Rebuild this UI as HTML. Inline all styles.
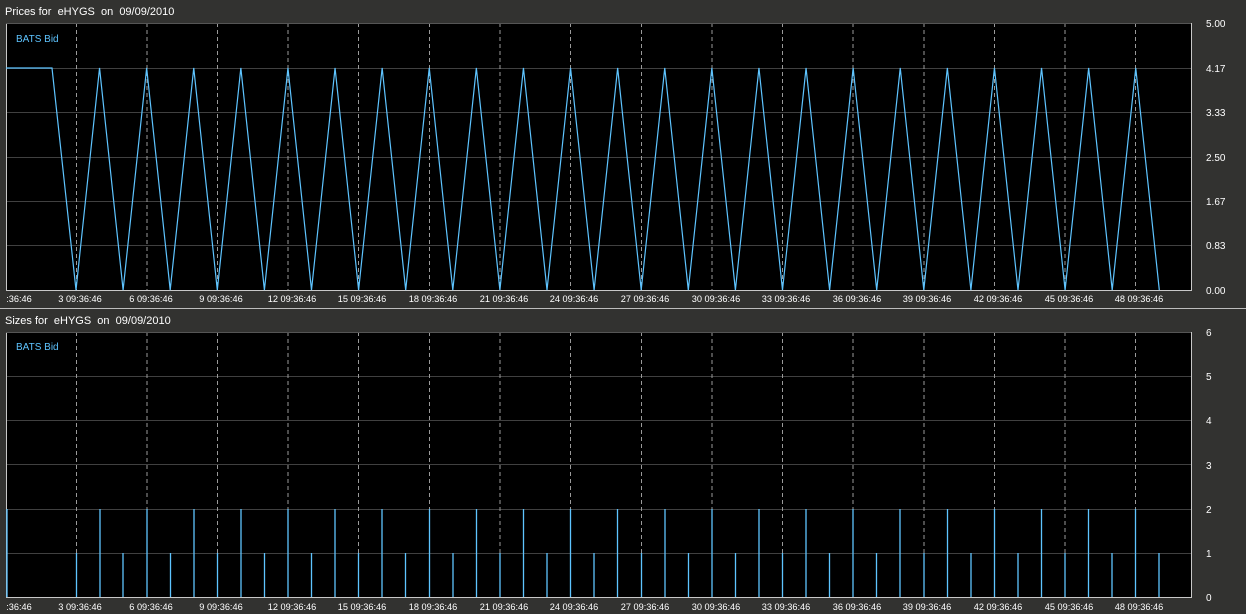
<!DOCTYPE html><html><head><meta charset="utf-8"><style>html,body{margin:0;padding:0;background:#323230;overflow:hidden}svg{display:block}text{font-family:"Liberation Sans",sans-serif;fill:#fff;white-space:pre}</style></head><body>
<svg width="1246" height="614" viewBox="0 0 1246 614" xmlns="http://www.w3.org/2000/svg">
<rect width="1246" height="614" fill="#323230"/>
<line x1="0" y1="308.5" x2="1246" y2="308.5" stroke="#bdbdbd"/>
<text x="5" y="15" font-size="11" xml:space="preserve">Prices for  eHYGS  on  09/09/2010</text>
<text x="5" y="324" font-size="11" xml:space="preserve">Sizes for  eHYGS  on  09/09/2010</text>
<rect x="6" y="23" width="1185" height="267" fill="#000"/>
<rect x="6" y="332" width="1185" height="265" fill="#000"/>
<g stroke="#404040" stroke-width="1">
<line x1="6" y1="68.5" x2="1191" y2="68.5"/><line x1="6" y1="112.5" x2="1191" y2="112.5"/><line x1="6" y1="157.5" x2="1191" y2="157.5"/><line x1="6" y1="201.5" x2="1191" y2="201.5"/><line x1="6" y1="245.5" x2="1191" y2="245.5"/>
<line x1="6" y1="376.5" x2="1191" y2="376.5"/><line x1="6" y1="420.5" x2="1191" y2="420.5"/><line x1="6" y1="464.5" x2="1191" y2="464.5"/><line x1="6" y1="509.5" x2="1191" y2="509.5"/><line x1="6" y1="553.5" x2="1191" y2="553.5"/>
</g>
<g stroke="#9a9a9a" stroke-dasharray="4,3">
<path d="M6.5 23V290M76.5 23V290M147 23V290M217.5 23V290M288 23V290M358.5 23V290M429.5 23V290M500 23V290M570.5 23V290M641.5 23V290M712 23V290M782.5 23V290M853 23V290M924 23V290M994.5 23V290M1065 23V290M1135.5 23V290"/>
<path d="M6.5 332V597M76.5 332V597M147 332V597M217.5 332V597M288 332V597M358.5 332V597M429.5 332V597M500 332V597M570.5 332V597M641.5 332V597M712 332V597M782.5 332V597M853 332V597M924 332V597M994.5 332V597M1065 332V597M1135.5 332V597"/>
</g>
<g fill="none" stroke="#c8c8c8">
<path d="M6.5 23V290.5H1191.5V23"/>
<path d="M6.5 332V597.5H1191.5V332"/>
<path d="M6 23.5H1191M6 332.5H1191" stroke="#555"/>
</g>
<polyline fill="none" stroke="#5ec4ff" stroke-width="1.2" points="6,68 52,68 76,290 99.55,68 123.1,290 146.65,68 170.2,290 193.75,68 217.3,290 240.85,68 264.4,290 287.95,68 311.5,290 335.05,68 358.6,290 382.15,68 405.7,290 429.25,68 452.8,290 476.35,68 499.9,290 523.45,68 547,290 570.55,68 594.1,290 617.65,68 641.2,290 664.75,68 688.3,290 711.85,68 735.4,290 758.95,68 782.5,290 806.05,68 829.6,290 853.15,68 876.7,290 900.25,68 923.8,290 947.35,68 970.9,290 994.45,68 1018,290 1041.55,68 1065.1,290 1088.65,68 1112.2,290 1135.75,68 1159.3,290"/>
<g stroke="#5ec4ff" stroke-width="1.3">
<path d="M7 597V509M76.5 597V553M100 597V509M123 597V553M147 597V509M170.5 597V553M194 597V509M217.5 597V553M241 597V509M264.5 597V553M288 597V509M311.5 597V553M335 597V509M358.5 597V553M382 597V509M405.5 597V553M429.5 597V509M453 597V553M476.5 597V509M500 597V553M523.5 597V509M547 597V553M570.5 597V509M594 597V553M617.5 597V509M641.5 597V553M665 597V509M688.5 597V553M712 597V509M735.5 597V553M759 597V509M782.5 597V553M806 597V509M829.5 597V553M853 597V509M876.5 597V553M900 597V509M924 597V553M947.5 597V509M971 597V553M994.5 597V509M1018 597V553M1041.5 597V509M1065 597V553M1088.5 597V509M1112 597V553M1135.5 597V509M1159 597V553"/>
</g>
<text x="16" y="42" font-size="10" style="fill:#5ec4ff">BATS Bid</text>
<text x="16" y="350" font-size="10" style="fill:#5ec4ff">BATS Bid</text>
<g font-size="10">
<text x="1206" y="27">5.00</text><text x="1206" y="72">4.17</text><text x="1206" y="116">3.33</text><text x="1206" y="161">2.50</text><text x="1206" y="205">1.67</text><text x="1206" y="249">0.83</text><text x="1206" y="294">0.00</text>
<text x="1206" y="336">6</text><text x="1206" y="380">5</text><text x="1206" y="424">4</text><text x="1206" y="469">3</text><text x="1206" y="513">2</text><text x="1206" y="557">1</text><text x="1206" y="601">0</text>
</g>
<g font-size="9.2" text-anchor="middle">
<text x="19" y="302">:36:46</text>
<text x="80" y="302">3 09:36:46</text><text x="151" y="302">6 09:36:46</text><text x="221" y="302">9 09:36:46</text><text x="292" y="302">12 09:36:46</text><text x="362" y="302">15 09:36:46</text><text x="433" y="302">18 09:36:46</text><text x="504" y="302">21 09:36:46</text><text x="574" y="302">24 09:36:46</text><text x="645" y="302">27 09:36:46</text><text x="716" y="302">30 09:36:46</text><text x="786" y="302">33 09:36:46</text><text x="857" y="302">36 09:36:46</text><text x="927" y="302">39 09:36:46</text><text x="998" y="302">42 09:36:46</text><text x="1069" y="302">45 09:36:46</text><text x="1139" y="302">48 09:36:46</text>
<text x="19" y="610">:36:46</text>
<text x="80" y="610">3 09:36:46</text><text x="151" y="610">6 09:36:46</text><text x="221" y="610">9 09:36:46</text><text x="292" y="610">12 09:36:46</text><text x="362" y="610">15 09:36:46</text><text x="433" y="610">18 09:36:46</text><text x="504" y="610">21 09:36:46</text><text x="574" y="610">24 09:36:46</text><text x="645" y="610">27 09:36:46</text><text x="716" y="610">30 09:36:46</text><text x="786" y="610">33 09:36:46</text><text x="857" y="610">36 09:36:46</text><text x="927" y="610">39 09:36:46</text><text x="998" y="610">42 09:36:46</text><text x="1069" y="610">45 09:36:46</text><text x="1139" y="610">48 09:36:46</text>
</g>
</svg>
</body></html>
